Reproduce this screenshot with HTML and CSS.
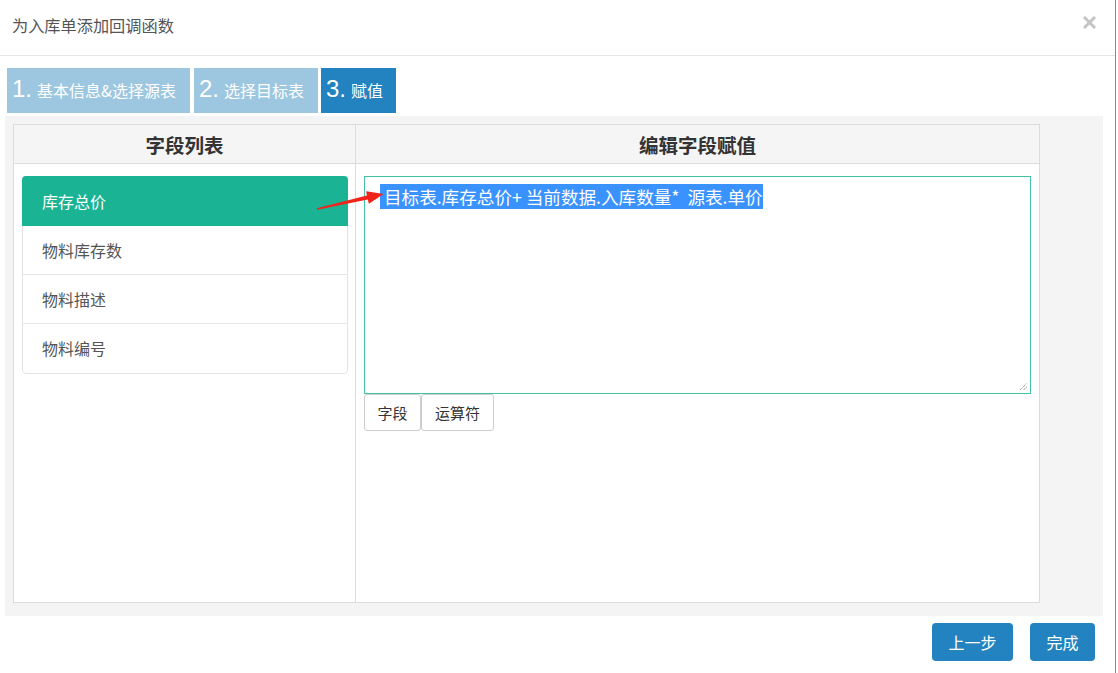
FILE: index.html
```html
<!DOCTYPE html>
<html lang="zh-CN">
<head>
<meta charset="utf-8">
<title>为入库单添加回调函数</title>
<link rel="stylesheet" href="styles.css">
</head>
<body>
<div class="page">
  <div class="modal-header">
    <span class="modal-title">为入库单添加回调函数</span>
    <span class="close" aria-label="关闭">
      <svg width="13" height="13" viewBox="0 0 13 13"><path d="M2 2 L11 11 M11 2 L2 11" stroke="#c4c4c4" stroke-width="3" stroke-linecap="square"/></svg>
    </span>
  </div>
  <div class="modal-body">
    <div class="steps">
      <div class="step done s1"><span class="num">1.</span>基本信息&amp;选择源表</div>
      <div class="step done s2"><span class="num">2.</span>选择目标表</div>
      <div class="step current s3"><span class="num">3.</span>赋值</div>
    </div>
    <div class="panel">
      <div class="grid-table">
        <div class="th th-left">字段列表</div>
        <div class="th">编辑字段赋值</div>
        <div class="td td-left">
          <ul class="field-list">
            <li class="field active">库存总价</li>
            <li class="field">物料库存数</li>
            <li class="field">物料描述</li>
            <li class="field">物料编号</li>
          </ul>
        </div>
        <div class="td td-right">
          <div class="editor"><span class="sel"> 目标表.库存总价+ 当前数据.入库数量*  源表.单价</span><svg class="grip" width="9" height="9" viewBox="0 0 9 9"><path d="M1 8 L8 1 M4.5 8 L8 4.5" stroke="#777" stroke-width="1" stroke-dasharray="1 1"/></svg></div>
          <div class="tools">
            <button class="btn-tool">字段</button>
            <button class="btn-tool wide">运算符</button>
          </div>
          <svg class="arrow" width="80" height="30" viewBox="310 185 80 30">
            <polygon points="315.8,208.2 365.9,195.6 365.1,191.2 382.5,194 367.9,203.8 366.8,199.5 316.2,209.8" fill="#f2231b"/>
          </svg>
        </div>
      </div>
    </div>
    <div class="footer">
      <button class="btn-primary">上一步</button>
      <button class="btn-primary">完成</button>
    </div>
  </div>
</div>
</body>
</html>
```
FILE: styles.css
```css
* { box-sizing: border-box; }
html, body { margin: 0; padding: 0; background: #fff; }
body {
  font-family: "Noto Sans CJK SC", "Noto Sans", sans-serif;
  color: #555;
  width: 1118px;
  height: 673px;
  overflow: hidden;
}
.page {
  width: 1116px;
  height: 673px;
  border-right: 1px solid #8a8a8a;
  position: relative;
}
.modal-header {
  height: 56px;
  border-bottom: 1px solid #e5e5e5;
  display: flex;
  align-items: flex-start;
  justify-content: space-between;
  padding: 13px 19px 0 12px;
}
.modal-title {
  font-size: 16.2px;
  line-height: 24px;
  color: #555;
}
.close {
  display: block;
  width: 13px;
  height: 13px;
  margin-top: 3px;
}
.close svg { display: block; }
.modal-body {
  padding: 12px 0 0 5px;
}
.steps {
  display: flex;
  margin-left: 2px;
  height: 45px;
}
.step {
  height: 45px;
  line-height: 45px;
  font-size: 16px;
  color: #fff;
  padding: 0 0 0 5px;
  white-space: nowrap;
}
.s1 { width: 183px; margin-right: 4px; }
.s2 { width: 124px; margin-right: 3px; }
.s3 { width: 75px; }
.step.done { background: #9dc7e0; }
.step.current { background: #2283c0; }
.num {
  font-family: "Liberation Sans", Arial, sans-serif;
  font-size: 24px;
  line-height: 24px;
  margin-right: 5px;
}
.panel {
  margin-top: 3px;
  width: 1098px;
  height: 500px;
  background: #f4f4f4;
  padding: 8px 0 0 8px;
}
.grid-table {
  width: 1027px;
  height: 479px;
  border: 1px solid #dcdcdc;
  background: #fff;
  display: grid;
  grid-template-columns: 342px 1fr;
  grid-template-rows: 39px 1fr;
}
.th {
  background: #f5f5f5;
  border-bottom: 1px solid #dcdcdc;
  display: flex;
  align-items: center;
  justify-content: center;
  font-size: 19.5px;
  font-weight: bold;
  color: #333;
}
.th-left, .td-left { border-right: 1px solid #dcdcdc; }
.td-left { padding: 12px 7px 0 8px; }
.td-right { padding: 12px 8px 0 8px; position: relative; }
.field-list {
  list-style: none;
  margin: 0;
  padding: 0;
  border: 1px solid #e3e3e3;
  border-radius: 4px;
}
.field {
  height: 49px;
  line-height: 48px;
  border-bottom: 1px solid #e6e6e6;
  padding-left: 19px;
  font-size: 16px;
  color: #555;
}
.field:last-child { border-bottom: none; height: 49px; }
.field.active {
  background: #1ab394;
  color: #fff;
  margin: -1px -1px 0 -1px;
  padding-left: 20px;
  height: 50px;
  line-height: 50px;
  border-bottom: none;
  border-radius: 4px 4px 0 0;
}
.editor {
  position: relative;
  height: 218px;
  border: 1px solid #43c2a5;
  background: #fff;
  padding: 10px 15px;
  font-size: 17.6px;
  line-height: 20px;
}
.sel {
  background: #3a92ff;
  color: #fff;
  white-space: pre;
}
.grip {
  position: absolute;
  right: 2px;
  bottom: 2px;
}
.tools {
  display: flex;
  gap: 0;
}
.btn-tool {
  height: 37px;
  width: 57px;
  padding: 0;
  background: #fff;
  border: 1px solid #cdcdcd;
  border-radius: 3px;
  font-family: "Noto Sans CJK SC", sans-serif;
  font-size: 15px;
  color: #333;
}
.btn-tool.wide { width: 73px; }
.arrow {
  position: absolute;
  left: -45px;
  top: 21px;
}
.footer {
  display: flex;
  justify-content: flex-end;
  gap: 17px;
  padding: 7px 0 0 0;
  width: 1090px;
}
.btn-primary {
  height: 38px;
  padding: 0 16.5px;
  background: #2283c0;
  color: #fff;
  border: none;
  border-radius: 4px;
  font-family: "Noto Sans CJK SC", sans-serif;
  font-size: 16px;
}
```
